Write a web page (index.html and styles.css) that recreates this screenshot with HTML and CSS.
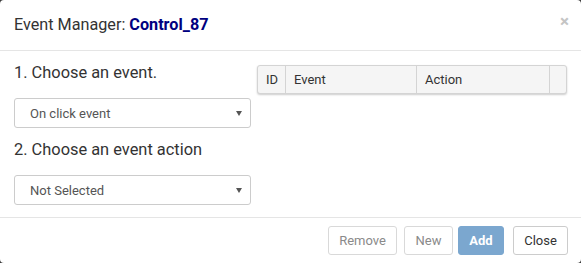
FILE: index.html
```html
<!DOCTYPE html>
<html>
<head>
<meta charset="utf-8">
<link rel="stylesheet" href="styles.css">
</head>
<body>
<div class="modal">
  <div class="modal-header">
    <h4 class="modal-title">Event Manager: <span class="ctrl">Control_87</span></h4>
    <span class="close">×</span>
  </div>
  <div class="modal-body">
    <div class="left">
      <h5 class="step step1">1. Choose an event.</h5>
      <div class="select"><span>On click event</span><span class="caret"></span></div>
      <h5 class="step step2">2. Choose an event action</h5>
      <div class="select"><span>Not Selected</span><span class="caret"></span></div>
    </div>
    <div class="right">
      <div class="table">
        <div class="th c-id">ID</div>
        <div class="th c-ev">Event</div>
        <div class="th c-ac">Action</div>
        <div class="th c-x"></div>
      </div>
    </div>
  </div>
  <div class="modal-footer">
    <button class="btn btn-dis b-remove">Remove</button>
    <button class="btn btn-dis b-new">New</button>
    <button class="btn btn-primary b-add">Add</button>
    <button class="btn btn-default b-close">Close</button>
  </div>
</div>
</body>
</html>
```
FILE: styles.css
```css
html, body {
  margin: 0;
  padding: 0;
  background: #3a3a3a;
}
body {
  font-family: Roboto, "Noto Sans", sans-serif;
  color: #333;
  width: 581px;
  height: 263px;
}
.modal {
  width: 581px;
  height: 263px;
  background: #fff;
  border-radius: 4px;
  box-sizing: border-box;
  display: flex;
  flex-direction: column;
}
.modal-header {
  height: 51px;
  flex: none;
  box-sizing: border-box;
  border-bottom: 1px solid #e5e5e5;
  display: flex;
  align-items: center;
  justify-content: space-between;
  padding: 0 12px 0 14px;
}
.modal-title {
  margin: 0;
  font-size: 16.2px;
  font-weight: 400;
  line-height: 20px;
}
.ctrl {
  color: #000080;
  font-weight: 700;
}
.close {
  color: #c4c4c4;
  font-size: 17px;
  font-weight: 700;
  line-height: 1;
  margin-top: -8px;
}
.modal-body {
  display: flex;
  gap: 6px;
  padding: 0 14px;
  height: 167px;
  flex: none;
  box-sizing: border-box;
  border-bottom: 1px solid #e5e5e5;
}
.left {
  width: 238px;
  display: flex;
  flex-direction: column;
}
.step {
  margin: 0;
  font-size: 16.4px;
  font-weight: 400;
  line-height: 20px;
}
.step1 { margin-top: 12px; margin-bottom: 15px; }
.step2 { margin-top: 12px; margin-bottom: 15px; }
.select {
  height: 30px;
  box-sizing: border-box;
  border: 1px solid #ccc;
  border-radius: 3px;
  display: flex;
  align-items: center;
  justify-content: space-between;
  padding: 0 8px 0 15px;
  font-size: 13px;
  color: #555;
}
.caret {
  width: 0;
  height: 0;
  border-left: 3px solid transparent;
  border-right: 3px solid transparent;
  border-top: 5px solid #555;
}
.right {
  flex: 1;
  padding-top: 14px;
}
.table {
  width: 310px;
  height: 29px;
  box-sizing: border-box;
  display: flex;
  background: #f5f5f5;
  border: 1px solid #d4d4d4;
  border-radius: 3px;
  box-shadow: 0 1px 2px rgba(0,0,0,0.2);
}
.th {
  font-size: 13px;
  color: #333;
  display: flex;
  align-items: center;
  padding-left: 8px;
  box-sizing: border-box;
  border-right: 1px solid #d4d4d4;
}
.c-id { width: 28px; }
.c-ev { width: 131px; }
.c-ac { width: 133px; }
.c-x { flex: 1; border-right: none; }
.modal-footer {
  flex: 1;
  display: flex;
  justify-content: flex-end;
  align-items: flex-start;
  padding: 8px 13px 0 0;
}
.btn {
  height: 29px;
  box-sizing: border-box;
  font-family: Roboto, "Noto Sans", sans-serif;
  font-size: 13px;
  border-radius: 3px;
  padding: 0;
  background: #fff;
  border: 1px solid #ccc;
  color: #333;
}
.btn-dis {
  color: #8a8a8a;
  border-color: #d9d9d9;
}
.btn-primary {
  background: #7ba7cf;
  border-color: #7ba7cf;
  color: #fff;
  font-weight: 700;
}
.b-remove { width: 69px; }
.b-new { width: 49px; margin-left: 7px; }
.b-add { width: 46px; margin-left: 5px; }
.b-close { width: 55px; margin-left: 9px; }
```
